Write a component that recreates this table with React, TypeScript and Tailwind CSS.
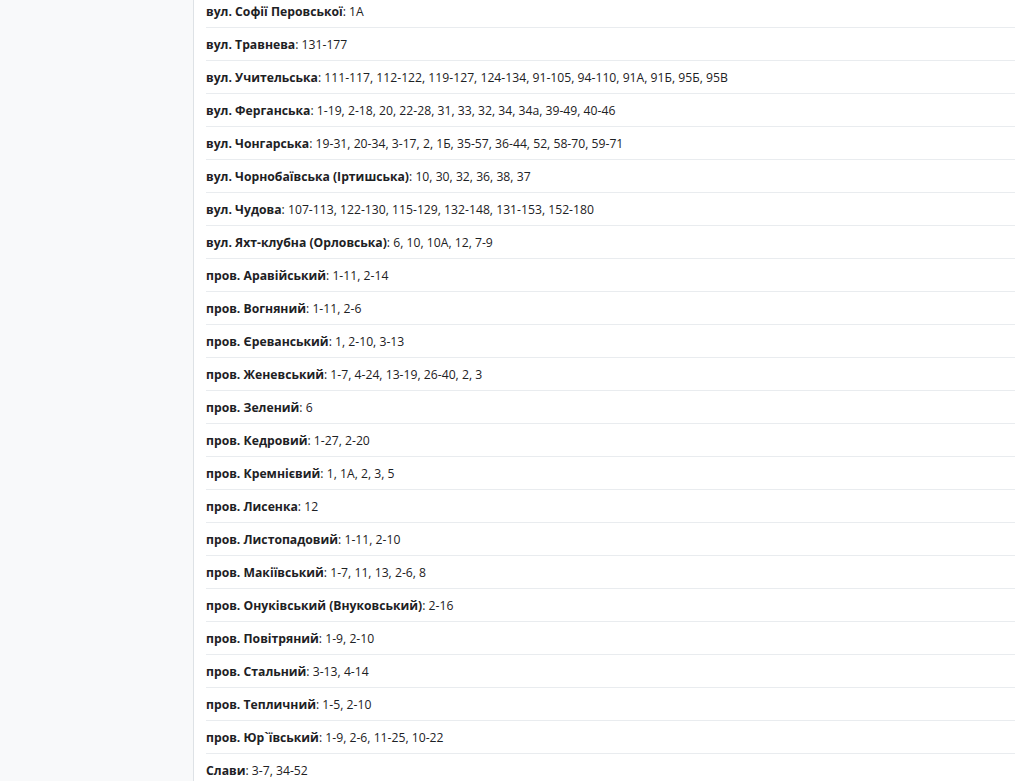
const STREETS: [string, string][] = [
  ["вул. Софії Перовської", "1А"],
  ["вул. Травнева", "131-177"],
  ["вул. Учительська", "111-117, 112-122, 119-127, 124-134, 91-105, 94-110, 91А, 91Б, 95Б, 95В"],
  ["вул. Ферганська", "1-19, 2-18, 20, 22-28, 31, 33, 32, 34, 34а, 39-49, 40-46"],
  ["вул. Чонгарська", "19-31, 20-34, 3-17, 2, 1Б, 35-57, 36-44, 52, 58-70, 59-71"],
  ["вул. Чорнобаївська (Іртишська)", "10, 30, 32, 36, 38, 37"],
  ["вул. Чудова", "107-113, 122-130, 115-129, 132-148, 131-153, 152-180"],
  ["вул. Яхт-клубна (Орловська)", "6, 10, 10А, 12, 7-9"],
  ["пров. Аравійський", "1-11, 2-14"],
  ["пров. Вогняний", "1-11, 2-6"],
  ["пров. Єреванський", "1, 2-10, 3-13"],
  ["пров. Женевський", "1-7, 4-24, 13-19, 26-40, 2, 3"],
  ["пров. Зелений", "6"],
  ["пров. Кедровий", "1-27, 2-20"],
  ["пров. Кремнієвий", "1, 1А, 2, 3, 5"],
  ["пров. Лисенка", "12"],
  ["пров. Листопадовий", "1-11, 2-10"],
  ["пров. Макіївський", "1-7, 11, 13, 2-6, 8"],
  ["пров. Онуківський (Внуковський)", "2-16"],
  ["пров. Повітряний", "1-9, 2-10"],
  ["пров. Стальний", "3-13, 4-14"],
  ["пров. Тепличний", "1-5, 2-10"],
  ["пров. Юр`ївський", "1-9, 2-6, 11-25, 10-22"],
  ["Слави", "3-7, 34-52"],
];

export default function App() {
  return (
    <div className="h-[781px] overflow-hidden flex bg-white font-['Open_Sans',sans-serif] text-[12.2px] text-[#1d2124]">
      <aside className="w-[194px] shrink-0 bg-[#f8f9fa] border-r border-[#dee2e6]" />
      <main className="flex-1 pl-[12px]">
        <ul className="-mt-[5px]">
          {STREETS.map(([name, houses]) => (
            <li key={name} className="pt-[7px] pb-[5px] leading-[20px] border-b border-[#e9ecef]">
              <span className="font-bold">{name}</span>: {houses}
            </li>
          ))}
        </ul>
      </main>
    </div>
  );
}
